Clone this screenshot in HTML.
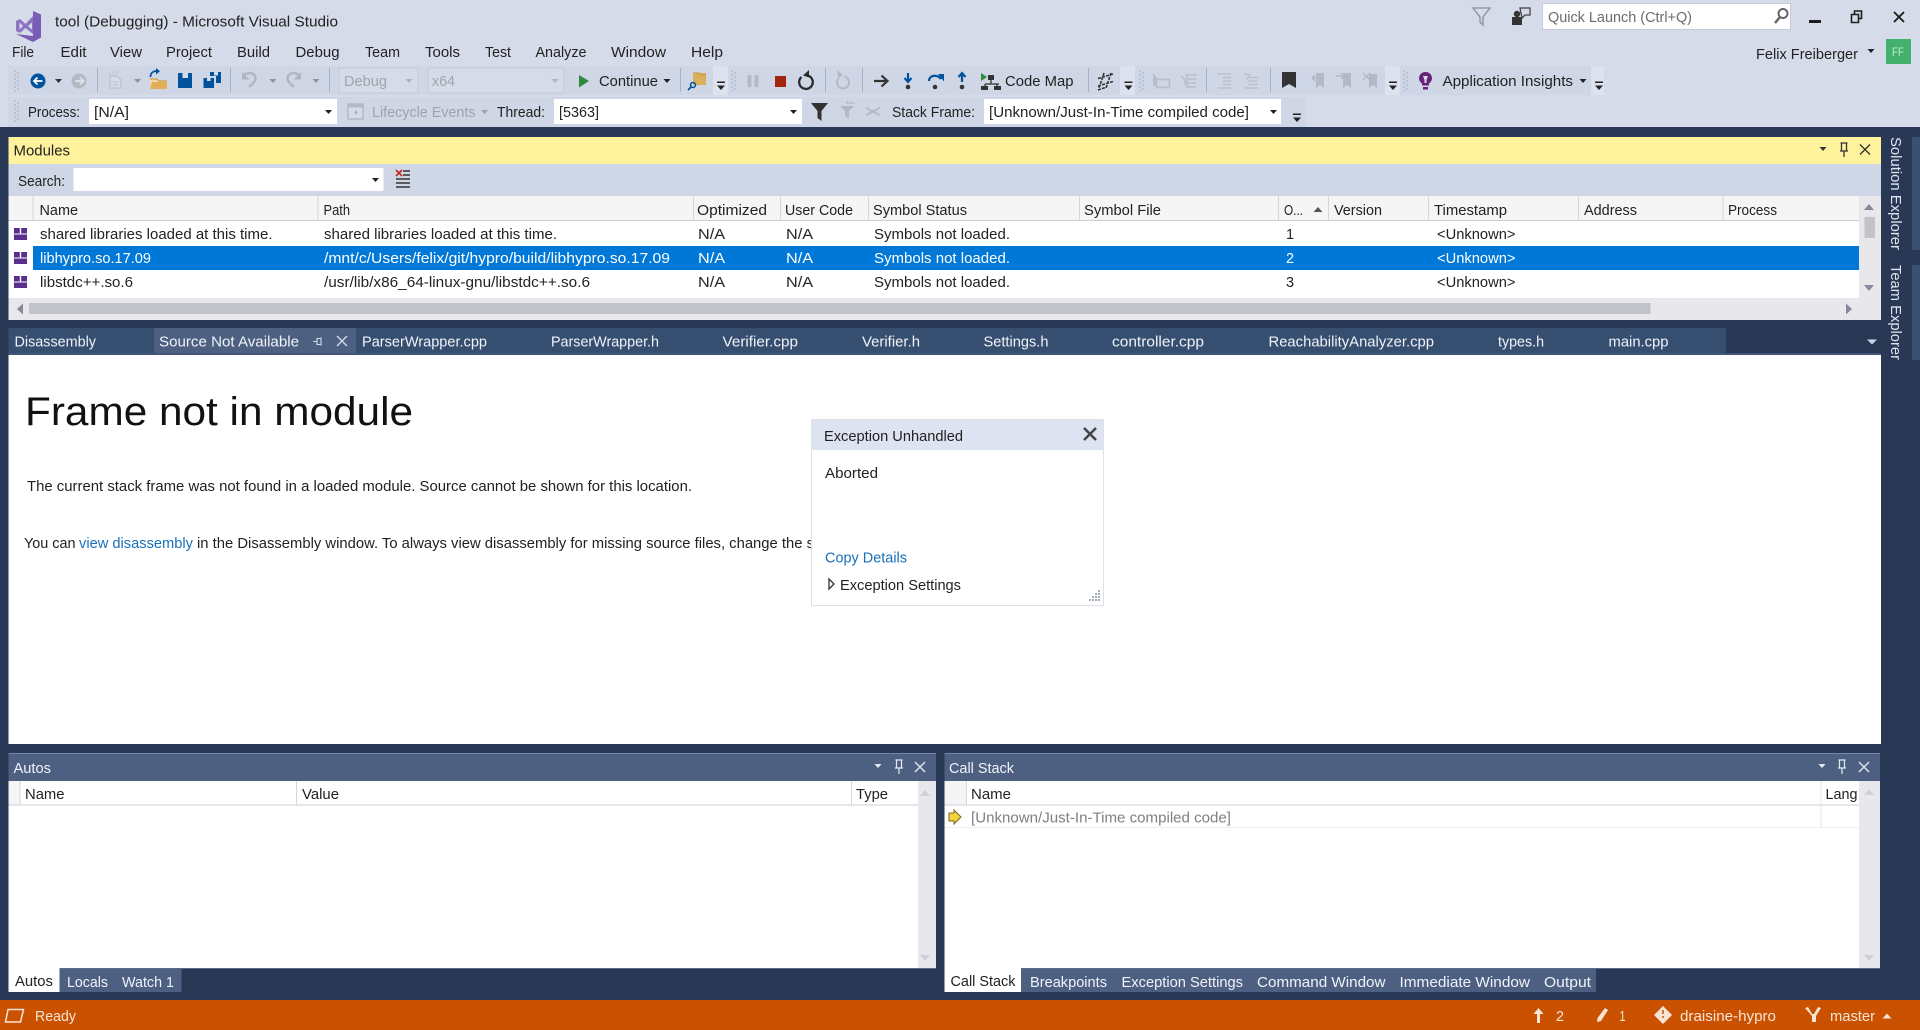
<!DOCTYPE html>
<html lang="en"><head><meta charset="utf-8"><title>tool (Debugging) - Microsoft Visual Studio</title>
<style>html,body{margin:0;padding:0;background:#293955;overflow:hidden}svg{display:block;filter:blur(.3px)}text{white-space:pre}</style></head>
<body>
<svg xmlns="http://www.w3.org/2000/svg" width="1920" height="1030" viewBox="0 0 1920 1030" font-family="'Liberation Sans',sans-serif" font-size="14.5" fill="#222">
<defs>
<path id="a" d="M-3.500-2h7L0 2z"/>
<g id="ov"><rect x="-4" y="-4.500" width="8" height="1.500"/><path d="M-4-.5h8L0 4z"/></g>
<g id="grip" fill="#9aa3b8"><circle cx="0" cy="0" r=".7"/><circle cx="3" cy="2" r=".7"/><circle cx="0" cy="4" r=".7"/><circle cx="3" cy="6" r=".7"/><circle cx="0" cy="8" r=".7"/><circle cx="3" cy="10" r=".7"/><circle cx="0" cy="12" r=".7"/><circle cx="3" cy="14" r=".7"/><circle cx="0" cy="16" r=".7"/><circle cx="3" cy="18" r=".7"/><circle cx="0" cy="20" r=".7"/></g>
<g id="mod" fill="#5c2d91"><rect x="0" y="0" width="5.800" height="5.500"/><rect x="7.200" y="0" width="5.800" height="5.500"/><rect x="0" y="6.500" width="13" height="5.500"/></g>
</defs>

<!-- chrome -->
<rect width="1920" height="127" fill="#d6dbe9"/>
<rect x="8" y="66" width="1596" height="29" fill="#cfd6e5"/>
<rect x="8" y="97" width="1298" height="30" fill="#cfd6e5"/>
<rect x="713" y="66" width="15" height="29" fill="#dde2ee"/>
<rect x="1120" y="66" width="15" height="29" fill="#dde2ee"/>
<rect x="1385" y="66" width="15" height="29" fill="#dde2ee"/>
<rect x="1591" y="66" width="13" height="29" fill="#dde2ee"/>

<path d="M33 11l8 3.500v23L33 42l-17-8 17 2z" fill="#7a5cb5"/>
<path d="M33 16l-7.500 8-5.500-5-4 2v10l4 2 5.500-5 7.500 6z" fill="#8d73c4"/>
<path d="M19.500 22.500v7l3.500-3.500z" fill="#d6dbe9"/><path d="M28 26l4-3.500v7z" fill="#d6dbe9"/>
<text x="55" y="26.500" textLength="283" lengthAdjust="spacingAndGlyphs">tool (Debugging) - Microsoft Visual Studio</text>

<!-- menu -->
<text x="12" y="57" textLength="22" lengthAdjust="spacingAndGlyphs">File</text>
<text x="60.500" y="57" textLength="26" lengthAdjust="spacingAndGlyphs">Edit</text>
<text x="110" y="57" textLength="32" lengthAdjust="spacingAndGlyphs">View</text>
<text x="166" y="57" textLength="46" lengthAdjust="spacingAndGlyphs">Project</text>
<text x="237" y="57" textLength="33" lengthAdjust="spacingAndGlyphs">Build</text>
<text x="295.500" y="57" textLength="44" lengthAdjust="spacingAndGlyphs">Debug</text>
<text x="365" y="57" textLength="35" lengthAdjust="spacingAndGlyphs">Team</text>
<text x="425" y="57" textLength="35" lengthAdjust="spacingAndGlyphs">Tools</text>
<text x="485" y="57" textLength="26" lengthAdjust="spacingAndGlyphs">Test</text>
<text x="535.500" y="57" textLength="51" lengthAdjust="spacingAndGlyphs">Analyze</text>
<text x="611" y="57" textLength="55" lengthAdjust="spacingAndGlyphs">Window</text>
<text x="691" y="57" textLength="32" lengthAdjust="spacingAndGlyphs">Help</text>

<!-- top right -->
<path d="M1473 8h17l-7 9v8l-3-3v-5z" fill="none" stroke="#8a8f99" stroke-width="1.300"/>
<rect x="1512" y="17" width="10" height="8" fill="#333"/><circle cx="1517" cy="14" r="3.200" fill="#333"/>
<path d="M1520 8h10v7h-5l-3 3z" fill="#d6dbe9" stroke="#444" stroke-width="1.300"/>
<rect x="1542.500" y="3.500" width="248" height="26" fill="#fff" stroke="#c6cbd8"/>
<text x="1548" y="22" textLength="144" lengthAdjust="spacingAndGlyphs" fill="#6d6d6d">Quick Launch (Ctrl+Q)</text>
<circle cx="1783" cy="13.500" r="4.500" fill="none" stroke="#666" stroke-width="2"/><path d="M1780 17l-5 6" stroke="#666" stroke-width="2.500"/>
<rect x="1809" y="20" width="12" height="3" fill="#1e1e1e"/>
<path d="M1854.500 14.500h-3v8h7v-8zM1854.500 14v-3h7v7.500h-3" fill="none" stroke="#1e1e1e" stroke-width="1.600"/>
<path d="M1894 12l10 10M1904 12l-10 10" stroke="#1e1e1e" stroke-width="1.900"/>
<text x="1756" y="59" textLength="102" lengthAdjust="spacingAndGlyphs">Felix Freiberger</text>
<use href="#a" x="1871" y="51"/>
<rect x="1886" y="39" width="25" height="25" fill="#43b06d"/>
<text x="1892" y="56" font-size="12" fill="#bfeccf" textLength="12" lengthAdjust="spacingAndGlyphs">FF</text>

<!-- toolbar row 1 -->
<use href="#grip" x="15" y="71"/>
<circle cx="38" cy="81" r="7.500" fill="#00539c"/><path d="M42.500 81h-8M37.500 77.500l-3.500 3.500 3.500 3.500" fill="none" stroke="#fff" stroke-width="1.800"/>
<use href="#a" x="58.500" y="81" fill="#333"/>
<circle cx="79" cy="81" r="7.500" fill="#b4b9c5"/><path d="M75 81h8M80 77.500l3.500 3.500-3.500 3.500" fill="none" stroke="#dfe3ec" stroke-width="1.800"/>
<rect x="97" y="68" width="1" height="24" fill="#a9b1c4"/>
<path d="M110 76h7l4 4v8h-11z" fill="#d6dbe9" stroke="#c0c5d0" stroke-width="1.500"/><path d="M108 73l3 2M113 70v4M118 71l-2 3M113 82h5M113 85h5" stroke="#c0c5d0" stroke-width="1.200" fill="none"/>
<use href="#a" x="137.500" y="81" fill="#8f94a0"/>
<path d="M150 79h7l2 2h8v8h-17z" fill="#f0d9a8"/><path d="M150 89l2-7h15v7z" fill="#e3ae5a"/><path d="M150 79h7l2 2h8" fill="none" stroke="#d19a3e" stroke-width="1.200"/>
<path d="M150.500 77c0-4 2.500-6 6.500-6" fill="none" stroke="#00539c" stroke-width="1.700"/><path d="M156 68v6.500l4-3.200z" fill="#00539c"/>
<path d="M178 73h14v15h-14z" fill="#00539c"/><rect x="182.500" y="73" width="5.500" height="5" fill="#d6dbe9"/>
<path d="M203.500 78h10.500v10h-10.500z" fill="#00539c"/><path d="M210 72h11v11h-5v-7h-6z" fill="#00539c"/><rect x="214" y="72" width="4" height="3.500" fill="#d6dbe9"/><rect x="207" y="78" width="3.500" height="3" fill="#d6dbe9"/>
<rect x="230" y="68" width="1" height="24" fill="#a9b1c4"/>
<path d="M244 75c5-3.500 11.500-2 11.500 3.500 0 3-3 5.500-6.500 8.500" fill="none" stroke="#b0b5c1" stroke-width="2.400"/><path d="M242 72v7.500h7.500z" fill="#b0b5c1"/>
<use href="#a" x="273" y="81" fill="#8f94a0"/>
<path d="M299 75c-5-3.500-11.500-2-11.500 3.500 0 3 3 5.500 6.500 8.500" fill="none" stroke="#b0b5c1" stroke-width="2.400"/><path d="M301 72v7.500h-7.500z" fill="#b0b5c1"/>
<use href="#a" x="316" y="81" fill="#8f94a0"/>
<rect x="329" y="68" width="1" height="24" fill="#a9b1c4"/>
<rect x="339" y="68" width="79" height="25" fill="#d6dbe9" stroke="#c3c9d8"/>
<text x="344" y="86" textLength="43" lengthAdjust="spacingAndGlyphs" fill="#a2a4a9">Debug</text>
<use href="#a" x="409" y="81" fill="#b0b4bd"/>
<rect x="428" y="68" width="136" height="25" fill="#d6dbe9" stroke="#c3c9d8"/>
<text x="432" y="86" textLength="23" lengthAdjust="spacingAndGlyphs" fill="#a2a4a9">x64</text>
<use href="#a" x="555" y="81" fill="#b0b4bd"/>
<path d="M579 75l10 6-10 6.500z" fill="#2e8b3d"/>
<text x="599" y="86" textLength="59" lengthAdjust="spacingAndGlyphs">Continue</text>
<use href="#a" x="667" y="81"/>
<rect x="680" y="68" width="1" height="24" fill="#a9b1c4"/>
<path d="M693 73h13v12h-13z" fill="#dcb05a"/><path d="M693 73h6l2 2h5" fill="none" stroke="#c29a46"/><circle cx="693" cy="85" r="2.500" fill="none" stroke="#00539c" stroke-width="1.500"/><path d="M691 87l-3 3" stroke="#00539c" stroke-width="1.600"/>
<use href="#ov" x="721" y="86"/>
<use href="#grip" x="732" y="71"/>
<rect x="747.500" y="75" width="4" height="12" fill="#b4b9c5"/><rect x="754.500" y="75" width="4" height="12" fill="#b4b9c5"/>
<rect x="775" y="76" width="11" height="11" fill="#a1260d"/>
<path d="M801.500 77a6.800 6.800 0 1 0 6 -1.500" fill="none" stroke="#2b2b2b" stroke-width="2.300"/><path d="M809 70v7.500l-6-2z" fill="#2b2b2b"/>
<rect x="825" y="68" width="1" height="24" fill="#a9b1c4"/>
<path d="M839 78a6 6 0 1 0 5-1.500" fill="none" stroke="#b4b9c5" stroke-width="2"/><path d="M837 70l6 5-5 3z" fill="#b4b9c5"/>
<rect x="862" y="68" width="1" height="24" fill="#a9b1c4"/>
<path d="M874 81h13M881.500 75.500l6 5.500-6 5.500" fill="none" stroke="#333" stroke-width="2.200"/>
<path d="M908 73v8M904.500 78l3.500 4 3.500-4" fill="none" stroke="#00539c" stroke-width="2.200"/><circle cx="908" cy="87" r="2.300" fill="#333"/>
<path d="M929 81c0-6 8-7 12-2" fill="none" stroke="#00539c" stroke-width="2.200"/><path d="M938 74h6v7.500z" fill="#00539c"/><circle cx="935" cy="87" r="2.300" fill="#333"/>
<path d="M962 82v-8M958.500 77l3.500-4 3.500 4" fill="none" stroke="#00539c" stroke-width="2.200"/><circle cx="962" cy="87" r="2.300" fill="#333"/>
<path d="M981 73v8l6-4z" fill="#2e8b3d"/><rect x="988" y="75" width="6" height="5" fill="#333"/><path d="M991 80v4M985 84h14M985 84v2M997 84v2" fill="none" stroke="#333" stroke-width="1.300"/><rect x="981" y="86" width="7" height="4" fill="#333"/><rect x="994" y="86" width="7" height="4" fill="#333"/>
<text x="1005" y="86" textLength="68.500" lengthAdjust="spacingAndGlyphs">Code Map</text>
<rect x="1088" y="68" width="1" height="24" fill="#a9b1c4"/>
<path d="M1098 78.500l15-4.500M1098 86l15-4.500M1098 90l9-3M1104 73l-5 15M1111 73l-5 15" fill="none" stroke="#333" stroke-width="1.600" stroke-dasharray="3 1.200"/>
<use href="#ov" x="1128.500" y="86"/>
<use href="#grip" x="1140" y="71"/>
<path d="M1153 73l6 7h-3v6h-3z" fill="#b9bec9"/><rect x="1156.500" y="79.500" width="13" height="8" fill="none" stroke="#b9bec9" stroke-width="1.600"/>
<path d="M1181 76l4 4v5M1185 75h12M1187 79h9M1187 83h9M1187 87h9M1187 75v13" fill="none" stroke="#b9bec9" stroke-width="1.500"/>
<rect x="1206" y="68" width="1" height="24" fill="#a9b1c4"/>
<path d="M1218 74h13M1223 77.500h8M1223 81h8M1223 84.500h8M1218 88h13" stroke="#b9bec9" stroke-width="1.300"/>
<path d="M1244 74.500h5v3h-2v2M1250 77.500h8M1248 81h10M1248 84.500h10M1244 88h14" fill="none" stroke="#b9bec9" stroke-width="1.300"/>
<rect x="1270" y="68" width="1" height="24" fill="#a9b1c4"/>
<path d="M1282 72h14v16l-7-4-7 4z" fill="#333"/>
<path d="M1316 73h8v15l-4-3-4 3z" fill="#b4b9c5"/><path d="M1320 78h-8M1312 78l3-3M1312 78l3 3" stroke="#b4b9c5" stroke-width="1.500" fill="none"/>
<path d="M1343 73h8v15l-4-3-4 3z" fill="#b4b9c5"/><path d="M1336 76h8M1344 76l-3-3M1344 76l-3 3" stroke="#b4b9c5" stroke-width="1.500" fill="none"/>
<path d="M1369 74h8v14l-4-3-4 3z" fill="#b4b9c5"/><path d="M1363 73l7 7M1370 73l-7 7" stroke="#b4b9c5" stroke-width="1.400"/>
<use href="#ov" x="1393" y="86"/>
<use href="#grip" x="1404" y="71"/>
<path d="M1425.500 72a6.200 6.200 0 0 1 3.500 11.500v2h-7v-2a6.200 6.200 0 0 1 3.500-11.500z" fill="#68217a"/><path d="M1423 76h5l-1.500 4v3h-2v-3z" fill="#d6dbe9"/><rect x="1423" y="87" width="5" height="2.500" fill="#68217a"/>
<text x="1442.500" y="86" textLength="130.500" lengthAdjust="spacingAndGlyphs">Application Insights</text>
<use href="#a" x="1583" y="81"/>
<use href="#ov" x="1599" y="86"/>

<!-- toolbar row 2 -->
<use href="#grip" x="15" y="101"/>
<text x="28" y="117" textLength="52" lengthAdjust="spacingAndGlyphs">Process:</text>
<rect x="89" y="99" width="248" height="25" fill="#fff"/>
<text x="94" y="117" textLength="35" lengthAdjust="spacingAndGlyphs">[N/A]</text>
<use href="#a" x="328.500" y="112"/>
<rect x="348" y="104" width="15" height="15" fill="#d6dbe9" stroke="#b4b9c5" stroke-width="1.500"/><rect x="348" y="104" width="15" height="3.500" fill="#b4b9c5"/><path d="M357 110l-3 2.500 3 2.500z" fill="#a6abb8"/>
<text x="372" y="117" textLength="103.500" lengthAdjust="spacingAndGlyphs" fill="#9fa3ab">Lifecycle Events</text>
<use href="#a" x="484.500" y="112" fill="#9fa3ab"/>
<text x="497" y="117" textLength="48" lengthAdjust="spacingAndGlyphs">Thread:</text>
<rect x="554" y="99" width="248" height="25" fill="#fff"/>
<text x="559" y="117" textLength="40" lengthAdjust="spacingAndGlyphs">[5363]</text>
<use href="#a" x="793.500" y="112"/>
<path d="M811 103h17l-6.500 8v10l-4-3v-7z" fill="#333"/>
<path d="M840 106h14l-5 5v8l-4-3v-5z" fill="#b4b9c5"/><path d="M846 103h9M846 103l2-2" stroke="#b4b9c5" stroke-width="1.200" fill="none"/>
<path d="M866 108c3 0 3 3 7 3s4-3 7-3M866 115c3 0 3-3 7-3s4 3 7 3" fill="none" stroke="#b4b9c5" stroke-width="1.900"/>
<text x="892" y="117" textLength="83" lengthAdjust="spacingAndGlyphs">Stack Frame:</text>
<rect x="984" y="99" width="297" height="25" fill="#fff"/>
<text x="989" y="117" textLength="260" lengthAdjust="spacingAndGlyphs">[Unknown/Just-In-Time compiled code]</text>
<use href="#a" x="1273.500" y="112"/>
<use href="#ov" x="1297" y="118"/>

<!-- dark background -->
<rect y="127" width="1920" height="873" fill="#293955"/>

<!-- sidebar -->
<rect x="1912" y="137" width="8" height="113" fill="#3c5072"/>
<rect x="1912" y="265" width="8" height="95" fill="#3c5072"/>
<text transform="translate(1891 137) rotate(90)" textLength="113" lengthAdjust="spacingAndGlyphs" fill="#dfe4f0">Solution Explorer</text>
<text transform="translate(1891 265) rotate(90)" textLength="95" lengthAdjust="spacingAndGlyphs" fill="#dfe4f0">Team Explorer</text>

<!-- Modules panel -->
<rect x="8.500" y="137" width="1872.500" height="27" fill="#fff29d"/>
<text x="13.500" y="155.500" textLength="56.500" lengthAdjust="spacingAndGlyphs">Modules</text>
<use href="#a" x="1823" y="149" fill="#333"/>
<path d="M1840.500 143h7M1841.500 143v8M1846.500 143v8M1840 151h8M1844 151v6" fill="none" stroke="#333" stroke-width="1.300"/>
<path d="M1860 144.500l10 10M1870 144.500l-10 10" stroke="#333" stroke-width="1.300"/>
<rect x="8.500" y="164" width="1872.500" height="32" fill="#cfd6e5"/>
<text x="18" y="186" textLength="47" lengthAdjust="spacingAndGlyphs">Search:</text>
<rect x="73.500" y="168" width="310" height="23" fill="#fff"/>
<use href="#a" x="375.500" y="180"/>
<path d="M396 170l6 6M402 170l-6 6" stroke="#c5281c" stroke-width="1.600"/><path d="M403 171h7M403 175h7M396 179h14M396 183h14M396 187h14" stroke="#333" stroke-width="1.500"/>

<rect x="8.500" y="196" width="1850.500" height="25" fill="#f5f5f5"/>
<rect x="8.500" y="220" width="1850.500" height="1" fill="#cccedb"/>
<g fill="#d4d5dc">
<rect x="32.500" y="196" width="1" height="25"/><rect x="317.500" y="196" width="1" height="25"/><rect x="693" y="196" width="1" height="25"/><rect x="780" y="196" width="1" height="25"/><rect x="868" y="196" width="1" height="25"/><rect x="1079" y="196" width="1" height="25"/><rect x="1278" y="196" width="1" height="25"/><rect x="1328" y="196" width="1" height="25"/><rect x="1428" y="196" width="1" height="25"/><rect x="1578" y="196" width="1" height="25"/><rect x="1722.500" y="196" width="1" height="25"/>
</g>
<text x="39.500" y="215" textLength="38.500" lengthAdjust="spacingAndGlyphs">Name</text>
<text x="323.500" y="215" textLength="26.500" lengthAdjust="spacingAndGlyphs">Path</text>
<text x="697" y="215" textLength="70" lengthAdjust="spacingAndGlyphs">Optimized</text>
<text x="785" y="215" textLength="68" lengthAdjust="spacingAndGlyphs">User Code</text>
<text x="873" y="215" textLength="94" lengthAdjust="spacingAndGlyphs">Symbol Status</text>
<text x="1084" y="215" textLength="77" lengthAdjust="spacingAndGlyphs">Symbol File</text>
<text x="1284" y="215" textLength="19" lengthAdjust="spacingAndGlyphs">O...</text>
<path d="M1313.500 212l4.500-5 4.500 5z" fill="#555"/>
<text x="1334" y="215" textLength="48" lengthAdjust="spacingAndGlyphs">Version</text>
<text x="1434" y="215" textLength="73" lengthAdjust="spacingAndGlyphs">Timestamp</text>
<text x="1584" y="215" textLength="53" lengthAdjust="spacingAndGlyphs">Address</text>
<text x="1728" y="215" textLength="49" lengthAdjust="spacingAndGlyphs">Process</text>

<rect x="8.500" y="221" width="1850.500" height="77" fill="#fff"/>
<rect x="33" y="246" width="1826" height="24" fill="#0078d7"/>
<use href="#mod" x="14" y="228"/><use href="#mod" x="14" y="252"/><use href="#mod" x="14" y="276"/>

<text x="40" y="239" textLength="232.500" lengthAdjust="spacingAndGlyphs">shared libraries loaded at this time.</text>
<text x="324" y="239" textLength="233" lengthAdjust="spacingAndGlyphs">shared libraries loaded at this time.</text>
<text x="698" y="239" textLength="27" lengthAdjust="spacingAndGlyphs">N/A</text>
<text x="786" y="239" textLength="27" lengthAdjust="spacingAndGlyphs">N/A</text>
<text x="874" y="239" textLength="136" lengthAdjust="spacingAndGlyphs">Symbols not loaded.</text>
<text x="1286" y="239">1</text>
<text x="1437" y="239" textLength="78.500" lengthAdjust="spacingAndGlyphs">&lt;Unknown&gt;</text>

<g fill="#fff">
<text x="40" y="263" textLength="111" lengthAdjust="spacingAndGlyphs">libhypro.so.17.09</text>
<text x="324" y="263" textLength="346" lengthAdjust="spacingAndGlyphs">/mnt/c/Users/felix/git/hypro/build/libhypro.so.17.09</text>
<text x="698" y="263" textLength="27" lengthAdjust="spacingAndGlyphs">N/A</text>
<text x="786" y="263" textLength="27" lengthAdjust="spacingAndGlyphs">N/A</text>
<text x="874" y="263" textLength="136" lengthAdjust="spacingAndGlyphs">Symbols not loaded.</text>
<text x="1286" y="263">2</text>
<text x="1437" y="263" textLength="78.500" lengthAdjust="spacingAndGlyphs">&lt;Unknown&gt;</text>
</g>

<text x="40" y="287" textLength="93" lengthAdjust="spacingAndGlyphs">libstdc++.so.6</text>
<text x="324" y="287" textLength="266" lengthAdjust="spacingAndGlyphs">/usr/lib/x86_64-linux-gnu/libstdc++.so.6</text>
<text x="698" y="287" textLength="27" lengthAdjust="spacingAndGlyphs">N/A</text>
<text x="786" y="287" textLength="27" lengthAdjust="spacingAndGlyphs">N/A</text>
<text x="874" y="287" textLength="136" lengthAdjust="spacingAndGlyphs">Symbols not loaded.</text>
<text x="1286" y="287">3</text>
<text x="1437" y="287" textLength="78.500" lengthAdjust="spacingAndGlyphs">&lt;Unknown&gt;</text>

<!-- module scrollbars -->
<rect x="1859" y="196" width="22" height="102" fill="#e8e8ec"/>
<path d="M1864 210l5-6 5 6z" fill="#868999"/>
<rect x="1864.500" y="217" width="10.500" height="21" fill="#c2c3c9"/>
<path d="M1864 285l5 6 5-6z" fill="#868999"/>
<rect x="8.500" y="298" width="1872.500" height="22" fill="#e8e8ec"/>
<path d="M23 303.500l-6 5.500 6 5.500z" fill="#868999"/>
<rect x="29" y="303" width="1621.500" height="11" fill="#c2c3c9"/>
<path d="M1846 303.500l6 5.500-6 5.500z" fill="#868999"/>

<!-- tabs -->
<rect x="8.500" y="328" width="1717.500" height="25" fill="#364e6f"/>
<rect x="154" y="328" width="202" height="25" fill="#4d6082"/>
<rect x="8.500" y="353" width="1872.500" height="2" fill="#415677"/>
<g fill="#f0f3f8">
<text x="14.500" y="346.500" textLength="81.500" lengthAdjust="spacingAndGlyphs">Disassembly</text>
<text x="159" y="346.500" textLength="140" lengthAdjust="spacingAndGlyphs">Source Not Available</text>
<text x="362" y="346.500" textLength="125" lengthAdjust="spacingAndGlyphs">ParserWrapper.cpp</text>
<text x="551" y="346.500" textLength="108" lengthAdjust="spacingAndGlyphs">ParserWrapper.h</text>
<text x="722.500" y="346.500" textLength="75.500" lengthAdjust="spacingAndGlyphs">Verifier.cpp</text>
<text x="862" y="346.500" textLength="58" lengthAdjust="spacingAndGlyphs">Verifier.h</text>
<text x="983.500" y="346.500" textLength="65" lengthAdjust="spacingAndGlyphs">Settings.h</text>
<text x="1112" y="346.500" textLength="92" lengthAdjust="spacingAndGlyphs">controller.cpp</text>
<text x="1268.500" y="346.500" textLength="165.500" lengthAdjust="spacingAndGlyphs">ReachabilityAnalyzer.cpp</text>
<text x="1498" y="346.500" textLength="46" lengthAdjust="spacingAndGlyphs">types.h</text>
<text x="1608.500" y="346.500" textLength="60" lengthAdjust="spacingAndGlyphs">main.cpp</text>
</g>
<path d="M313 341.500h4M317 338.500h4v6h-4zM321 337.500v8" fill="none" stroke="#d6dbe9" stroke-width="1.100"/>
<path d="M337 336l10 10M347 336l-10 10" stroke="#d6dbe9" stroke-width="1.300"/>
<path d="M1867 339.500h10l-5 5z" fill="#cfd6e5"/>

<!-- editor -->
<rect x="8.500" y="355" width="1872.500" height="389" fill="#fff"/>
<text x="25" y="425" font-size="40" fill="#111" textLength="388" lengthAdjust="spacingAndGlyphs">Frame not in module</text>
<text x="27" y="491" textLength="665" lengthAdjust="spacingAndGlyphs">The current stack frame was not found in a loaded module. Source cannot be shown for this location.</text>
<text x="24" y="548" textLength="51.500" lengthAdjust="spacingAndGlyphs">You can</text>
<text x="79" y="548" textLength="114" lengthAdjust="spacingAndGlyphs" fill="#1a6fb8">view disassembly</text>
<text x="197" y="548" textLength="617" lengthAdjust="spacingAndGlyphs">in the Disassembly window. To always view disassembly for missing source files, change the s</text>

<!-- exception dialog -->
<rect x="811.500" y="419.500" width="292" height="186" fill="#fff" stroke="#dde1ea"/>
<rect x="812" y="420" width="291" height="30" fill="#dde3f0"/>
<text x="824" y="441" textLength="139" lengthAdjust="spacingAndGlyphs">Exception Unhandled</text>
<path d="M1084 428l12 12M1096 428l-12 12" stroke="#444" stroke-width="2.500"/>
<text x="825" y="478" textLength="53" lengthAdjust="spacingAndGlyphs">Aborted</text>
<text x="825" y="562.500" textLength="82" lengthAdjust="spacingAndGlyphs" fill="#1a6fb8">Copy Details</text>
<path d="M829 579l5 5-5 5z" fill="#fff" stroke="#333" stroke-width="1.300"/>
<text x="840" y="590" textLength="121" lengthAdjust="spacingAndGlyphs">Exception Settings</text>
<g fill="#a6abb8"><rect x="1098" y="590" width="2" height="2"/><rect x="1098" y="593" width="2" height="2"/><rect x="1095" y="593" width="2" height="2"/><rect x="1098" y="596" width="2" height="2"/><rect x="1095" y="596" width="2" height="2"/><rect x="1092" y="596" width="2" height="2"/><rect x="1098" y="599" width="2" height="2"/><rect x="1095" y="599" width="2" height="2"/><rect x="1092" y="599" width="2" height="2"/><rect x="1089" y="599" width="2" height="2"/></g>

<!-- Autos -->
<rect x="8.500" y="753" width="927.500" height="28" fill="#4d6082"/>
<rect x="8.500" y="753" width="927.500" height="1" fill="#7486a6"/>
<text x="13.500" y="773" textLength="37.500" lengthAdjust="spacingAndGlyphs" fill="#f0f3f8">Autos</text>
<use href="#a" x="878" y="766" fill="#e6eaf2"/>
<path d="M895.500 760h7M896.500 760v8M901.500 760v8M895 768h8M899 768v6" fill="none" stroke="#e6eaf2" stroke-width="1.200"/>
<path d="M915 762l10 10M925 762l-10 10" stroke="#e6eaf2" stroke-width="1.300"/>
<rect x="8.500" y="781" width="927.500" height="187" fill="#fff"/>
<rect x="8.500" y="781" width="11" height="24" fill="#f5f5f5"/>
<rect x="8.500" y="804.500" width="909.500" height="1" fill="#cccedb"/>
<rect x="19.500" y="781" width="1" height="24" fill="#d4d5dc"/>
<rect x="296" y="781" width="1" height="24" fill="#d4d5dc"/>
<rect x="851" y="781" width="1" height="24" fill="#d4d5dc"/>
<text x="25" y="799" textLength="39.500" lengthAdjust="spacingAndGlyphs">Name</text>
<text x="302" y="799" textLength="37" lengthAdjust="spacingAndGlyphs">Value</text>
<text x="856" y="799" textLength="32" lengthAdjust="spacingAndGlyphs">Type</text>
<rect x="918" y="781" width="18" height="187" fill="#e8e8ec"/>
<path d="M920 796l5-6 5 6z" fill="#d0d1d7"/><path d="M920 955l5 6 5-6z" fill="#d0d1d7"/>
<rect x="59.500" y="969" width="122" height="23" fill="#4d6082"/>
<rect x="8.500" y="968" width="51" height="24" fill="#fff"/>
<rect x="59.500" y="968" width="876.500" height="1" fill="#5a6c8d"/>
<text x="15" y="986" textLength="38" lengthAdjust="spacingAndGlyphs">Autos</text>
<text x="67" y="987" textLength="41" lengthAdjust="spacingAndGlyphs" fill="#f0f3f8">Locals</text>
<text x="122" y="987" textLength="52" lengthAdjust="spacingAndGlyphs" fill="#f0f3f8">Watch 1</text>

<!-- Call stack -->
<rect x="944.500" y="753" width="935.500" height="28" fill="#4d6082"/>
<rect x="944.500" y="753" width="935.500" height="1" fill="#7486a6"/>
<text x="949" y="773" textLength="65" lengthAdjust="spacingAndGlyphs" fill="#f0f3f8">Call Stack</text>
<use href="#a" x="1822" y="766" fill="#e6eaf2"/>
<path d="M1838.500 760h7M1839.500 760v8M1844.500 760v8M1838 768h8M1842 768v6" fill="none" stroke="#e6eaf2" stroke-width="1.200"/>
<path d="M1859 762l10 10M1869 762l-10 10" stroke="#e6eaf2" stroke-width="1.300"/>
<rect x="944.500" y="781" width="935.500" height="187" fill="#fff"/>
<rect x="944.500" y="781" width="21.500" height="24" fill="#f5f5f5"/>
<rect x="944.500" y="804.500" width="914.500" height="1" fill="#cccedb"/>
<rect x="966" y="781" width="1" height="24" fill="#d4d5dc"/>
<rect x="1820.500" y="781" width="1" height="46" fill="#e4e5ea"/>
<rect x="944.500" y="827" width="914.500" height="1" fill="#eeeef2"/>
<text x="971" y="799" textLength="40" lengthAdjust="spacingAndGlyphs">Name</text>
<text x="1825.500" y="799" textLength="32" lengthAdjust="spacingAndGlyphs">Lang</text>
<path d="M949 813h5v-3l7 7-7 7v-3h-5z" fill="#f5d13b" stroke="#7a6a20" stroke-width="1"/>
<text x="971" y="822.500" textLength="260" lengthAdjust="spacingAndGlyphs" fill="#808080">[Unknown/Just-In-Time compiled code]</text>
<rect x="1859" y="781" width="21" height="187" fill="#e8e8ec"/>
<path d="M1864 795l5-6 5 6z" fill="#d0d1d7"/><path d="M1864 955l5 6 5-6z" fill="#d0d1d7"/>
<rect x="1021" y="969" width="575" height="23" fill="#4d6082"/>
<rect x="944.500" y="968" width="76.500" height="24" fill="#fff"/>
<rect x="1021" y="968" width="859" height="1" fill="#5a6c8d"/>
<text x="950.500" y="986" textLength="65" lengthAdjust="spacingAndGlyphs">Call Stack</text>
<g fill="#f0f3f8">
<text x="1030" y="987" textLength="77" lengthAdjust="spacingAndGlyphs">Breakpoints</text>
<text x="1121.500" y="987" textLength="121.500" lengthAdjust="spacingAndGlyphs">Exception Settings</text>
<text x="1257" y="987" textLength="128.500" lengthAdjust="spacingAndGlyphs">Command Window</text>
<text x="1399.500" y="987" textLength="130.500" lengthAdjust="spacingAndGlyphs">Immediate Window</text>
<text x="1544" y="987" textLength="47" lengthAdjust="spacingAndGlyphs">Output</text>
</g>

<!-- status bar -->
<rect y="1000" width="1920" height="30" fill="#ca5100"/>
<path d="M8 1009.500h15.500l-3 12.500H5.500z" fill="none" stroke="#f7e4d6" stroke-width="1.500"/>
<g fill="#f7e4d6">
<text x="35" y="1021" textLength="41" lengthAdjust="spacingAndGlyphs">Ready</text>
<path d="M1538.500 1008l-5 6h3.500v9h3v-9h3.500z"/>
<text x="1556" y="1021" textLength="8" lengthAdjust="spacingAndGlyphs">2</text>
<path d="M1605 1008l3 2-7 11-4 1 .5-4z"/>
<text x="1619.500" y="1021" textLength="6" lengthAdjust="spacingAndGlyphs">1</text>
<path d="M1663 1006l9 9-9 9-9-9z"/>
<text x="1680" y="1021" textLength="96" lengthAdjust="spacingAndGlyphs">draisine-hypro</text>
<path d="M1805 1008l3-1 4 7h2l4-7 3 1-5 8v6h-4v-6z"/>
<text x="1830" y="1021" textLength="45" lengthAdjust="spacingAndGlyphs">master</text>
<path d="M1882.500 1018.500l4.500-5 4.500 5z"/>
</g>
<path d="M1663 1010l0 4M1663 1018v-2" stroke="#ca5100" stroke-width="1.500"/>
</svg>
</body></html>
